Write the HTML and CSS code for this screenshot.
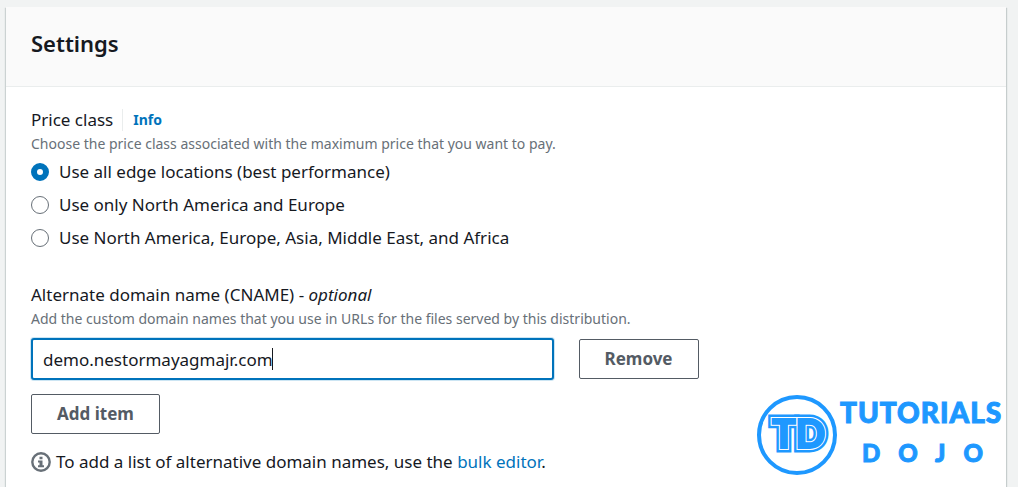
FILE: index.html
```html
<!DOCTYPE html>
<html lang="en">
<head>
<meta charset="utf-8">
<title>Settings</title>
<meta name="viewport" content="width=device-width, initial-scale=1">
<link rel="stylesheet" href="styles.css">
</head>
<body>
<main class="panel">
  <header class="panel-header"><h1 class="panel-title">Settings</h1></header>
  <form class="panel-body">
    <fieldset class="field price-class">
      <legend class="label-row"><span class="label">Price class</span><a class="info" href="#info">Info</a></legend>
      <p class="hint">Choose the price class associated with the maximum price that you want to pay.</p>
      <div class="options">
        <label class="option"><input class="radio" type="radio" name="price" checked><span>Use all edge locations (best performance)</span></label>
        <label class="option"><input class="radio" type="radio" name="price"><span>Use only North America and Europe</span></label>
        <label class="option"><input class="radio" type="radio" name="price"><span>Use North America, Europe, Asia, Middle East, and Africa</span></label>
      </div>
    </fieldset>
    <div class="field">
      <label class="label" for="cname">Alternate domain name (CNAME) - <em>optional</em></label>
      <p class="hint">Add the custom domain names that you use in URLs for the files served by this distribution.</p>
      <div class="domain-row">
        <div class="input-wrap">
          <input class="text-input" id="cname" type="text" value="demo.nestormayagmajr.com">
          <span class="caret"></span>
        </div>
        <div><button class="button" type="button">Remove</button></div>
      </div>
      <button class="button" type="button">Add item</button>
      <p class="note">
        <svg class="note-icon" viewBox="0 0 20 20" aria-hidden="true">
          <circle cx="10" cy="10" r="8.7" fill="none" stroke="#687078" stroke-width="2.4"/>
          <path d="M8.5 4.7h3v2.6h-3zM7 8.5h4.5v4.7H13v2H7v-2h1.5v-2.7H7z" fill="#687078"/>
        </svg>
        <span>To add a list of alternative domain names, use the <a class="link" href="#bulk">bulk editor</a>.</span>
      </p>
    </div>
  </form>
  <svg class="brand" viewBox="0 0 248 84" role="img" aria-label="Tutorials Dojo">
    <circle cx="41" cy="42" r="38" fill="none" stroke="#1e98ff" stroke-width="4"/>
    <text class="brand-mark" x="16" y="55">TD</text>
    <text class="brand-mark brand-mark-gap" x="16" y="55">TD</text>
    <text class="brand-mark brand-mark-core" x="16" y="55">TD</text>
    <text class="brand-name" x="84" y="30">TUTORIALS</text>
    <text class="brand-sub" x="106" y="69">DOJO</text>
  </svg>
</main>
</body>
</html>
```
FILE: styles.css
```css
* { box-sizing: border-box; }

body {
  margin: 0;
  min-height: 100vh;
  display: flex;
  padding: 7px 12px 0 6px;
  background: #f1f3f3;
  color: #16191f;
  font-family: "Noto Sans", "Open Sans", sans-serif;
  font-size: 17px;
  line-height: 24px;
}

.panel {
  position: relative;
  flex: 1;
  background: #fff;
  box-shadow: 0 1px 1px 0 #d5dbdb, 1px 1px 1px 0 #c3cacb, -1px 1px 1px 0 #c9d0d1;
}

.panel-header {
  padding: 24px 25px 31px;
  background: #fafafa;
  border-bottom: 1px solid #eaeded;
}

.panel-title {
  margin: 0;
  font-size: 22px;
  line-height: 24px;
  font-weight: 600;
}

.panel-body { padding: 21px 25px 8px; }

.field {
  min-width: 0;
  margin: 0;
  padding: 0;
  border: 0;
}

.price-class { margin-bottom: 33px; }

.label-row {
  display: flex;
  align-items: center;
  padding: 0;
}

.label { display: block; }

.info {
  margin-left: 9px;
  padding-left: 10px;
  border-left: 1px solid #eaeded;
  color: #0073bb;
  font-size: 14px;
  line-height: 22px;
  font-weight: 700;
  text-decoration: none;
}

.hint {
  margin: 0;
  color: #687078;
  font-size: 14px;
  line-height: 24px;
}

.options {
  display: grid;
  gap: 9px;
  margin-top: 4px;
}

.option {
  display: flex;
  align-items: center;
  gap: 10px;
}

.radio {
  appearance: none;
  width: 18px;
  height: 18px;
  margin: 0;
  border: 1px solid #687078;
  border-radius: 50%;
  background: #fff;
}

.radio:checked { border: 6px solid #0073bb; }

.domain-row {
  display: grid;
  grid-template-columns: 55% 1fr;
  gap: 25px;
  align-items: center;
  margin: 7px 0 14px;
}

.input-wrap { position: relative; }

.text-input {
  display: block;
  width: 100%;
  height: 42px;
  padding: 0 9px 0 10px;
  border: 2px solid #0073bb;
  border-radius: 3px;
  outline: 0;
  box-shadow: 0 0 0 1px #cce5f3;
  background: #fff;
  color: #16191f;
  font: inherit;
}

.caret {
  position: absolute;
  left: 241px;
  top: 10px;
  width: 1px;
  height: 22px;
  background: #16191f;
}

.button {
  height: 40px;
  padding: 0 25px;
  border: 1px solid #545b64;
  border-radius: 2px;
  background: #fff;
  color: #545b64;
  font: inherit;
  font-weight: 700;
}

.note {
  display: flex;
  align-items: center;
  gap: 5px;
  margin: 16px 0 0;
}

.note-icon {
  width: 20px;
  height: 20px;
}

.link {
  color: #0073bb;
  text-decoration: none;
}

.brand {
  position: absolute;
  right: 2px;
  bottom: 10px;
  width: 248px;
  height: 84px;
  fill: #1e98ff;
  font-family: Lato, sans-serif;
  font-weight: 900;
}

.brand-mark {
  font-size: 39px;
  stroke: #1e98ff;
  stroke-width: 9px;
}

.brand-mark-gap {
  stroke: #fff;
  stroke-width: 4px;
}

.brand-mark-core { stroke-width: 2px; }

.brand-name {
  font-size: 28px;
  stroke: #1e98ff;
  stroke-width: 1px;
  letter-spacing: 1px;
}

.brand-sub {
  font-size: 24px;
  stroke: #1e98ff;
  stroke-width: 1px;
  letter-spacing: 18px;
}
```
